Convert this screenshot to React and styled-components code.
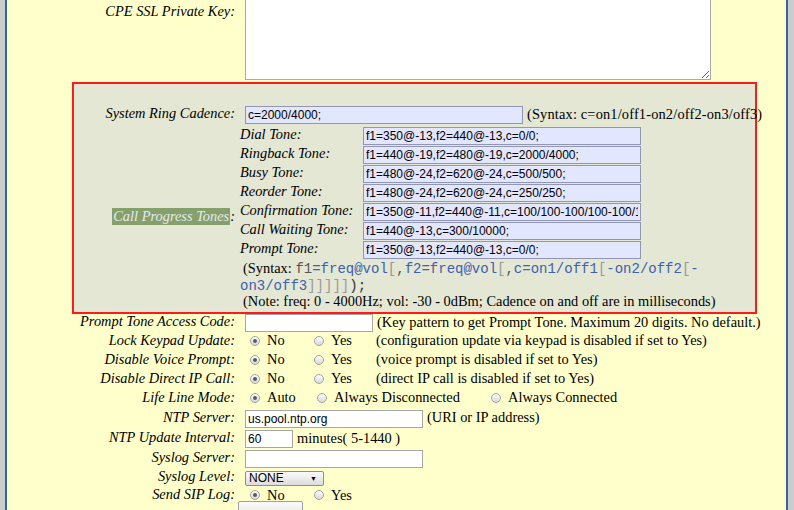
import React from "react";
import styled, { createGlobalStyle } from "styled-components";

const GlobalStyle = createGlobalStyle`
  html, body {
    margin: 0;
    padding: 0;
    background: #cccccc;
    overflow: hidden;
  }
  body {
    font-family: "Liberation Serif", "Times New Roman", serif;
    font-size: 14.4px;
    color: #000;
  }
`;

const Page = styled.div`
  margin: -20px 0 0 5px;
  width: 779px;
  min-height: 560px;
  background: #ffffcc;
  border-left: 2px solid #336699;
  border-right: 2px solid #336699;
`;

const Row = styled.div`
  display: grid;
  grid-template-columns: ${(p) => p.$labelWidth || 228}px 1fr;
  column-gap: 10px;
  align-items: ${(p) => (p.$top ? "start" : "center")};
  height: ${(p) => (p.$h ? `${p.$h}px` : "auto")};
  margin-top: ${(p) => p.$mt || 0}px;
`;

const Label = styled.div`
  text-align: right;
  font-style: italic;
  white-space: nowrap;
  line-height: 15px;
  padding-top: ${(p) => p.$pt || 0}px;
  padding-bottom: 3px;
`;

const Value = styled.div`
  display: flex;
  align-items: center;
  white-space: nowrap;
`;

const ToneCell = styled.div`
  margin-left: -5px;
`;

const TextArea = styled.textarea`
  box-sizing: border-box;
  width: 466px;
  height: 100px;
  border: 1px solid #a9a9a9;
  background: #fff;
  margin: 0;
  padding: 1px;
`;

const Input = styled.input`
  box-sizing: border-box;
  width: ${(p) => p.$w}px;
  height: 18px;
  margin: 0;
  padding: 0 2px;
  border: 1px solid ${(p) => (p.$tint ? "#9096b4" : "#a6a6a6")};
  background: ${(p) => (p.$tint ? "#e2e6ff" : "#ffffff")};
  font-family: "Liberation Sans", Arial, sans-serif;
  font-size: 12px;
  color: #000;
  outline: none;
`;

const Hint = styled.span`
  display: inline-block;
  margin-left: ${(p) => (p.$flush ? 0 : 4)}px;
  line-height: 15px;
  padding-bottom: 2px;
  letter-spacing: ${(p) => p.$ls || 0}px;
`;

const Box = styled.div`
  margin: 2px 0 0 65px;
  width: 681px;
  border: 2px solid #ff1a1a;
  background: #e4e7d3;
  padding: 22px 0 3px 0;
`;

const Highlight = styled.span`
  display: inline-block;
  background: #86a06b;
  color: #e2e9f2;
  line-height: 17px;
  padding: 0 1px;
`;

const ToneGrid = styled.div`
  display: grid;
  grid-template-columns: 123px 278px;
  row-gap: 1px;
  align-items: center;
`;

const SubLabel = styled.div`
  font-style: italic;
  white-space: nowrap;
  line-height: 15px;
  padding-bottom: 3px;
`;

const NoteLine = styled.div`
  height: ${(p) => p.$h}px;
  line-height: ${(p) => p.$h}px;
  white-space: nowrap;
  padding-left: ${(p) => (p.$indent ? 3 : 0)}px;
`;

const Code = styled.span`
  font-family: "Liberation Mono", "Courier New", monospace;
  font-size: 14px;
  color: #4060b0;
`;

const Plain = styled.span`
  color: ${(p) => p.$c || "#555"};
`;

const Option = styled.span`
  display: inline-flex;
  align-items: center;
  width: ${(p) => p.$w}px;
  line-height: 15px;
  padding-bottom: 2px;
`;

const Radio = styled.span`
  box-sizing: border-box;
  width: 10px;
  height: 10px;
  margin: 0 7px 0 5px;
  border-radius: 50%;
  border: 1px solid #a4a4a4;
  background: linear-gradient(#fdfdfd, #d9d9d9);
  display: inline-flex;
  align-items: center;
  justify-content: center;
  flex: none;

  &::after {
    content: "";
    width: 4px;
    height: 4px;
    border-radius: 50%;
    background: ${(p) => (p.$on ? "#5a5a5a" : "transparent")};
  }
`;

const Select = styled.div`
  box-sizing: border-box;
  width: 79px;
  height: 15px;
  border: 1px solid #8e8e8e;
  border-radius: 2px;
  background: linear-gradient(#fbfbfb, #dcdcdc);
  display: flex;
  align-items: center;
  justify-content: space-between;
  padding: 0 6px 0 3px;
  font-family: "Liberation Sans", Arial, sans-serif;
  font-size: 12px;
`;

const Arrow = styled.span`
  font-size: 7px;
`;

const Button = styled.div`
  box-sizing: border-box;
  width: 65px;
  height: 22px;
  margin: -3px 0 0 -7px;
  border: 1px solid #a0a0a0;
  border-radius: 2px;
  background: linear-gradient(#fbfbfb, #dddddd);
`;

const tones = [
  ["Dial Tone:", "f1=350@-13,f2=440@-13,c=0/0;"],
  ["Ringback Tone:", "f1=440@-19,f2=480@-19,c=2000/4000;"],
  ["Busy Tone:", "f1=480@-24,f2=620@-24,c=500/500;"],
  ["Reorder Tone:", "f1=480@-24,f2=620@-24,c=250/250;"],
  ["Confirmation Tone:", "f1=350@-11,f2=440@-11,c=100/100-100/100-100/100;"],
  ["Call Waiting Tone:", "f1=440@-13,c=300/10000;"],
  ["Prompt Tone:", "f1=350@-13,f2=440@-13,c=0/0;"],
];

function YesNo({ label, note, h = 19 }) {
  return (
    <Row $h={h}>
      <Label>{label}</Label>
      <Value>
        <Option $w={64}>
          <Radio $on />
          No
        </Option>
        <Option $w={67}>
          <Radio />
          Yes
        </Option>
        {note && <Hint $flush>{note}</Hint>}
      </Value>
    </Row>
  );
}

export default function App() {
  return (
    <>
      <GlobalStyle />
      <Page>
        <Row $top>
          <Label $pt={24}>CPE SSL Private Key:</Label>
          <Value>
            <TextArea />
          </Value>
        </Row>

        <Box>
          <Row $labelWidth={161} $h={18}>
            <Label>System Ring Cadence:</Label>
            <Value>
              <Input $tint $w={278} defaultValue="c=2000/4000;" />
              <Hint $ls={0.16}>(Syntax: c=on1/off1-on2/off2-on3/off3)</Hint>
            </Value>
          </Row>

          <Row $labelWidth={161} $mt={3}>
            <Label>
              <Highlight>Call Progress Tones</Highlight>:
            </Label>
            <ToneCell>
              <ToneGrid>
                {tones.map(([name, val]) => (
                  <React.Fragment key={name}>
                    <SubLabel>{name}</SubLabel>
                    <Input $tint $w={278} defaultValue={val} />
                  </React.Fragment>
                ))}
              </ToneGrid>
              <NoteLine $h={18} $indent>
                (Syntax:{" "}
                <Code>
                  <Plain>f1</Plain>=freq@vol<Plain $c="#999">[</Plain>
                  <Plain>,</Plain>f2=freq@vol<Plain $c="#999">[</Plain>
                  <Plain>,</Plain>c=on1/off1<Plain $c="#999">[</Plain>-on2/off2
                  <Plain $c="#999">[</Plain>-
                </Code>
              </NoteLine>
              <NoteLine $h={16}>
                <Code>
                  on3/off3<Plain $c="#999">]]]]]</Plain>
                  <Plain $c="#333">);</Plain>
                </Code>
              </NoteLine>
              <NoteLine $h={16} $indent>
                (Note: freq: 0 - 4000Hz; vol: -30 - 0dBm; Cadence on and off are in milliseconds)
              </NoteLine>
            </ToneCell>
          </Row>
        </Box>

        <Row $h={18}>
          <Label>Prompt Tone Access Code:</Label>
          <Value>
            <Input $w={128} />
            <Hint>(Key pattern to get Prompt Tone. Maximum 20 digits. No default.)</Hint>
          </Value>
        </Row>
        <YesNo
          label="Lock Keypad Update:"
          note="(configuration update via keypad is disabled if set to Yes)"
        />
        <YesNo label="Disable Voice Prompt:" note="(voice prompt is disabled if set to Yes)" />
        <YesNo label="Disable Direct IP Call:" note="(direct IP call is disabled if set to Yes)" />
        <Row $h={19}>
          <Label>Life Line Mode:</Label>
          <Value>
            <Option $w={67}>
              <Radio $on />
              Auto
            </Option>
            <Option $w={174}>
              <Radio />
              Always Disconnected
            </Option>
            <Option $w={150}>
              <Radio />
              Always Connected
            </Option>
          </Value>
        </Row>
        <Row $h={21}>
          <Label>NTP Server:</Label>
          <Value>
            <Input $w={178} defaultValue="us.pool.ntp.org" />
            <Hint>(URI or IP address)</Hint>
          </Value>
        </Row>
        <Row $h={20}>
          <Label>NTP Update Interval:</Label>
          <Value>
            <Input $w={48} defaultValue="60" />
            <Hint>minutes( 5-1440 )</Hint>
          </Value>
        </Row>
        <Row $h={20}>
          <Label>Syslog Server:</Label>
          <Value>
            <Input $w={178} />
          </Value>
        </Row>
        <Row $h={18}>
          <Label>Syslog Level:</Label>
          <Value>
            <Select>
              NONE
              <Arrow>▼</Arrow>
            </Select>
          </Value>
        </Row>
        <YesNo label="Send SIP Log:" h={17} />
        <Row $top $h={24}>
          <Label $pt={8}>Download Configuration:</Label>
          <Value>
            <Button />
          </Value>
        </Row>
      </Page>
    </>
  );
}
